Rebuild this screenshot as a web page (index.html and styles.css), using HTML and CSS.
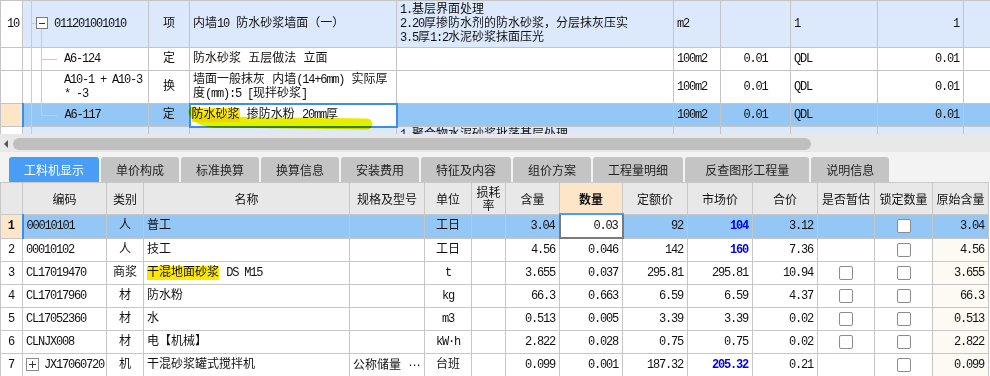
FILE: index.html
```
<!DOCTYPE html>
<html lang="zh-CN">
<head>
    <meta charset="UTF-8">
    <title>工料机显示</title>
    <link rel="stylesheet" href="styles.css">
</head>
<body>
    <!-- 清单 / 定额 -->
    <div class="top-wrap">
        <table class="top">
            <colgroup>
                <col><col><col><col><col><col><col><col><col><col>
            </colgroup>
            <tr class="qd r1">
                <td class="num m">10</td>
                <td class="code lv1 m">011201001010</td>
                <td class="c">项</td>
                <td>内墙<span class="m">10</span> 防水砂浆墙面（一）</td>
                <td class="desc"><span class="m">1.</span>基层界面处理<br><span class="m">2.20</span>厚掺防水剂的防水砂浆，分层抹灰压实<br><span class="m">3.5</span>厚<span class="m">1:2</span>水泥砂浆抹面压光</td>
                <td class="m">m2</td>
                <td class="c m"></td>
                <td class="m">1</td>
                <td class="n">1</td>
                <td></td>
            </tr>
            <tr class="r2">
                <td class="num"></td>
                <td class="code lv2 m">A6-124</td>
                <td class="c">定</td>
                <td>防水砂浆 五层做法 立面</td>
                <td></td>
                <td class="m">100m2</td>
                <td class="c m">0.01</td>
                <td class="m">QDL</td>
                <td class="n">0.01</td>
                <td></td>
            </tr>
            <tr class="r3">
                <td class="num"></td>
                <td class="code lv2 m">A10-1 + A10-3<br>* -3</td>
                <td class="c">换</td>
                <td>墙面一般抹灰 内墙<span class="m">(14+6mm)</span> 实际厚<br>度<span class="m">(mm):5 [</span>现拌砂浆<span class="m">]</span></td>
                <td></td>
                <td class="m">100m2</td>
                <td class="c m">0.01</td>
                <td class="m">QDL</td>
                <td class="n">0.01</td>
                <td></td>
            </tr>
            <tr class="sel r4">
                <td class="num cur"></td>
                <td class="code lv2 m mark">A6-117</td>
                <td class="c">定</td>
                <td class="edit"><span class="hl">防水砂浆</span> 掺防水粉 <span class="m">20mm</span>厚</td>
                <td></td>
                <td class="m">100m2</td>
                <td class="c m">0.01</td>
                <td class="m">QDL</td>
                <td class="n">0.01</td>
                <td></td>
            </tr>
            <tr class="qd r5">
                <td class="num"></td>
                <td></td>
                <td></td>
                <td></td>
                <td class="desc"><span class="m">1.</span>聚合物水泥砂浆批荡基层处理</td>
                <td></td>
                <td></td>
                <td></td>
                <td></td>
                <td></td>
            </tr>
        </table>

        <!-- tree connectors and the marker stroke drawn over the grid -->
        <svg class="overlay" width="990" height="134" viewBox="0 0 990 134">
            <g stroke="#f3c487" stroke-width="1" fill="none">
                <path d="M31.5 0 V134"/>
                <path d="M31.5 23.5 H36"/>
                <path d="M41.5 29 V115.5"/>
                <path d="M41.5 59.5 H57"/>
                <path d="M41.5 115.5 H57"/>
            </g>
            <rect x="36.5" y="17.5" width="11" height="11" fill="#fff" stroke="#7d7d7d"/>
            <path d="M39 23.5 H45" stroke="#333" stroke-width="1"/>
            <path class="marker" d="M194 112 C198 120 206 122 222 122 L367 124" stroke="#e6ee00" stroke-width="11" stroke-linecap="round" fill="none"/>
        </svg>
    </div>

    <div class="hscroll">
        <span class="arrow"></span>
        <span class="thumb"></span>
    </div>

    <div class="tabbar">
        <span class="tab on">工料机显示</span>
        <span class="tab">单价构成</span>
        <span class="tab">标准换算</span>
        <span class="tab">换算信息</span>
        <span class="tab">安装费用</span>
        <span class="tab">特征及内容</span>
        <span class="tab">组价方案</span>
        <span class="tab">工程量明细</span>
        <span class="tab wide">反查图形工程量</span>
        <span class="tab">说明信息</span>
    </div>

    <!-- 工料机 -->
    <table class="grid">
        <colgroup>
            <col><col><col><col><col><col><col><col><col><col><col><col><col><col><col>
        </colgroup>
        <thead>
            <tr>
                <th></th>
                <th>编码</th>
                <th>类别</th>
                <th>名称</th>
                <th>规格及型号</th>
                <th>单位</th>
                <th class="two">损耗<br>率</th>
                <th>含量</th>
                <th class="qty">数量</th>
                <th>定额价</th>
                <th>市场价</th>
                <th>合价</th>
                <th>是否暂估</th>
                <th>锁定数量</th>
                <th>原始含量</th>
            </tr>
        </thead>
        <tbody>
            <tr class="sel">
                <td class="num cur">1</td>
                <td class="m mark">00010101</td>
                <td class="c">人</td>
                <td>普工</td>
                <td></td>
                <td class="c">工日</td>
                <td></td>
                <td class="n">3.04</td>
                <td class="n edit">0.03</td>
                <td class="n">92</td>
                <td class="n blue">104</td>
                <td class="n">3.12</td>
                <td></td>
                <td class="c"><span class="cb"></span></td>
                <td class="n orig">3.04</td>
            </tr>
            <tr>
                <td class="num">2</td>
                <td class="m">00010102</td>
                <td class="c">人</td>
                <td>技工</td>
                <td></td>
                <td class="c">工日</td>
                <td></td>
                <td class="n">4.56</td>
                <td class="n">0.046</td>
                <td class="n">142</td>
                <td class="n blue">160</td>
                <td class="n">7.36</td>
                <td></td>
                <td class="c"><span class="cb"></span></td>
                <td class="n orig">4.56</td>
            </tr>
            <tr>
                <td class="num">3</td>
                <td class="m">CL17019470</td>
                <td class="c">商浆</td>
                <td><span class="hl">干混地面砂浆</span> <span class="m">DS M15</span></td>
                <td></td>
                <td class="c m">t</td>
                <td></td>
                <td class="n">3.655</td>
                <td class="n">0.037</td>
                <td class="n">295.81</td>
                <td class="n">295.81</td>
                <td class="n">10.94</td>
                <td class="c"><span class="cb"></span></td>
                <td class="c"><span class="cb"></span></td>
                <td class="n orig">3.655</td>
            </tr>
            <tr>
                <td class="num">4</td>
                <td class="m">CL17017960</td>
                <td class="c">材</td>
                <td>防水粉</td>
                <td></td>
                <td class="c m">kg</td>
                <td></td>
                <td class="n">66.3</td>
                <td class="n">0.663</td>
                <td class="n">6.59</td>
                <td class="n">6.59</td>
                <td class="n">4.37</td>
                <td class="c"><span class="cb"></span></td>
                <td class="c"><span class="cb"></span></td>
                <td class="n orig">66.3</td>
            </tr>
            <tr>
                <td class="num">5</td>
                <td class="m">CL17052360</td>
                <td class="c">材</td>
                <td>水</td>
                <td></td>
                <td class="c m">m3</td>
                <td></td>
                <td class="n">0.513</td>
                <td class="n">0.005</td>
                <td class="n">3.39</td>
                <td class="n">3.39</td>
                <td class="n">0.02</td>
                <td class="c"><span class="cb"></span></td>
                <td class="c"><span class="cb"></span></td>
                <td class="n orig">0.513</td>
            </tr>
            <tr>
                <td class="num">6</td>
                <td class="m">CLNJX008</td>
                <td class="c">材</td>
                <td>电【机械】</td>
                <td></td>
                <td class="c m">kW·h</td>
                <td></td>
                <td class="n">2.822</td>
                <td class="n">0.028</td>
                <td class="n">0.75</td>
                <td class="n">0.75</td>
                <td class="n">0.02</td>
                <td class="c"><span class="cb"></span></td>
                <td class="c"><span class="cb"></span></td>
                <td class="n orig">2.822</td>
            </tr>
            <tr>
                <td class="num">7</td>
                <td class="m"><span class="plus"><svg width="11" height="11" viewBox="0 0 11 11"><path d="M2 5.5 H9 M5.5 2 V9" stroke="#333" stroke-width="1"/></svg></span>JX17060720</td>
                <td class="c">机</td>
                <td>干混砂浆罐式搅拌机</td>
                <td>公称储量 <span class="dots">⋯</span></td>
                <td class="c">台班</td>
                <td></td>
                <td class="n">0.099</td>
                <td class="n">0.001</td>
                <td class="n">187.32</td>
                <td class="n blue">205.32</td>
                <td class="n">0.21</td>
                <td></td>
                <td class="c"><span class="cb"></span></td>
                <td class="n orig">0.099</td>
            </tr>
        </tbody>
    </table>
</body>
</html>
```
FILE: styles.css
```
body {
    margin: 0;
    width: 990px;
    height: 376px;
    overflow: hidden;
    background: #fff;
    color: #111;
    font-family: "Liberation Mono", "Noto Sans CJK SC", monospace;
    font-size: 12px;
    line-height: 14px;
}

table {
    border-collapse: collapse;
    table-layout: fixed;
}

td, th {
    padding: 0 3px;
    white-space: nowrap;
    overflow: hidden;
}

.m {
    letter-spacing: -1.2px;
}

.c {
    text-align: center;
}

.n {
    text-align: right;
    padding-right: 4px;
    letter-spacing: -1.2px;
}

.hl {
    background: #ffe800;
}

/* top grid */

.top-wrap {
    position: relative;
    height: 134px;
    overflow: hidden;
}

.top {
    width: 990px;
}

.top col:nth-child(1) { width: 22px; }
.top col:nth-child(2) { width: 126px; }
.top col:nth-child(3) { width: 41px; }
.top col:nth-child(4) { width: 207px; }
.top col:nth-child(5) { width: 277px; }
.top col:nth-child(6) { width: 47px; }
.top col:nth-child(7) { width: 70px; }
.top col:nth-child(8) { width: 87px; }
.top col:nth-child(9) { width: 86px; }
.top col:nth-child(10) { width: 27px; }

.top td {
    border: 1px solid #c4c4c4;
}

.top .r1 { height: 47px; }
.top .r2 { height: 23px; }
.top .r3 { height: 33px; }
.top .r4 { height: 23px; }
.top .r5 { height: 30px; }

.top .r5 td {
    vertical-align: top;
    padding-top: 1px;
}

.top .qd td {
    background: #dce9fc;
}

.top .qd td.num {
    background: #fff;
}

.top .num {
    padding-left: 6px;
}

.top .lv1 {
    padding-left: 31px;
}

.top .lv2 {
    padding-left: 41px;
}

.sel td {
    background: #94c7f5;
}

.sel td.cur {
    background: #fde5c8;
}

.sel td.mark {
    border-left: 2px solid #3c8ee8;
}

.top .sel td.edit {
    background: #fff;
    border: 2px solid #3c8ee8;
    padding-left: 1px;
}

.overlay {
    position: absolute;
    left: 0;
    top: 0;
    pointer-events: none;
}

.overlay .marker {
    mix-blend-mode: multiply;
}

/* scrollbar + tabs */

.hscroll {
    height: 18px;
    background: #e8e8e8;
    display: flex;
    align-items: flex-start;
}

.hscroll .arrow {
    width: 0;
    height: 0;
    margin: 6px 5px 0 4px;
    border-top: 4px solid transparent;
    border-bottom: 4px solid transparent;
    border-right: 4px solid #555;
}

.hscroll .thumb {
    width: 798px;
    height: 12px;
    margin-top: 4px;
    border-radius: 6px;
    background: #bfbfbf;
}

.tabbar {
    height: 25px;
    padding: 5px 0 0 9px;
    background: #f3f3f3;
    display: flex;
    gap: 2px;
}

.tab {
    display: flex;
    align-items: center;
    padding: 0 15px;
    border-radius: 3px 3px 0 0;
    background: #c4c4c4;
    color: #222;
    font-family: "Noto Sans CJK SC", sans-serif;
    font-size: 12px;
}

.tab.on {
    background: #4a9df5;
    color: #fff;
}

.tab.wide {
    padding: 0 20px;
}

/* 工料机 grid */

.grid {
    width: 988px;
}

.grid col:nth-child(1) { width: 22px; }
.grid col:nth-child(2) { width: 84px; }
.grid col:nth-child(3) { width: 37px; }
.grid col:nth-child(4) { width: 206px; }
.grid col:nth-child(5) { width: 75px; }
.grid col:nth-child(6) { width: 47px; }
.grid col:nth-child(7) { width: 34px; }
.grid col:nth-child(8) { width: 54px; }
.grid col:nth-child(9) { width: 63px; }
.grid col:nth-child(10) { width: 65px; }
.grid col:nth-child(11) { width: 65px; }
.grid col:nth-child(12) { width: 65px; }
.grid col:nth-child(13) { width: 57px; }
.grid col:nth-child(14) { width: 58px; }
.grid col:nth-child(15) { width: 56px; }

.grid th {
    height: 30px;
    padding: 0;
    background: #e8e8e8;
    border: 1px solid #c8c8c8;
    font-weight: normal;
    font-family: "Noto Sans CJK SC", sans-serif;
    line-height: 13px;
}

.grid th.qty {
    background: #fde5c8;
    font-weight: bold;
    border-bottom: 2px solid #4a9df5;
}

.grid td {
    height: 22px;
    border: 1px solid #c6c6c6;
}

.grid .num {
    text-align: center;
    padding: 0;
}

.grid .sel .num {
    font-weight: bold;
}

.grid td.orig {
    background: #fdfaf4;
}

.grid .sel td.orig {
    background: #94c7f5;
}

.grid .sel td.edit {
    background: #fff;
    border: 2px solid #7a7a7a;
}

.blue {
    color: #0000f0;
    font-weight: bold;
}

.dots {
    font-family: "DejaVu Sans", sans-serif;
}

.cb {
    display: inline-block;
    width: 12px;
    height: 12px;
    border: 1px solid #8c8c8c;
    border-radius: 2px;
    background: #fff;
    vertical-align: middle;
}

.plus {
    display: inline-block;
    width: 11px;
    height: 11px;
    margin-right: 5px;
    border: 1px solid #8c8c8c;
    vertical-align: middle;
    letter-spacing: 0;
}

.plus svg {
    display: block;
}
```
